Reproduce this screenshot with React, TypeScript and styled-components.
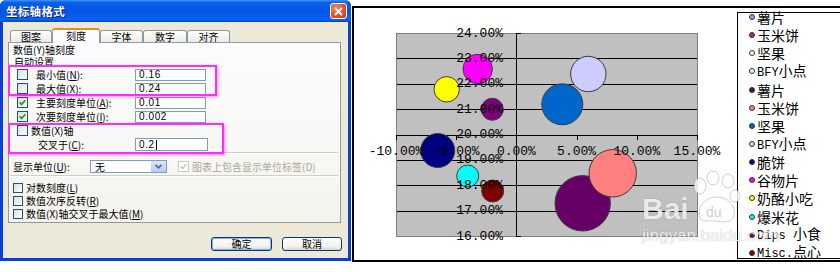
import React from "react";
import styled, { createGlobalStyle } from "styled-components";

const GlobalStyle = createGlobalStyle`
  html, body {
    margin: 0;
    padding: 0;
    background: #ffffff;
  }
  body {
    width: 840px;
    height: 272px;
    overflow: hidden;
    font-family: "Noto Sans CJK SC", sans-serif;
  }
`;

const Page = styled.div`
  display: flex;
  align-items: flex-start;
  width: 840px;
  height: 272px;
`;

/* ---------- dialog ---------- */

const Dialog = styled.div`
  width: 351px;
  height: 261px;
  flex: none;
  display: flex;
  flex-direction: column;
  background: #0b3ed6;
  border-radius: 6px 6px 0 0;
  overflow: hidden;
`;

const TitleBar = styled.div`
  height: 22px;
  flex: none;
  display: flex;
  align-items: center;
  justify-content: space-between;
  padding: 0 4px 0 6px;
  background: linear-gradient(
    to bottom,
    #3d95ff 0%,
    #0a5fe8 12%,
    #0055e5 50%,
    #0a62f0 88%,
    #0048d0 100%
  );
`;

const Title = styled.span`
  color: #ffffff;
  font-size: 11.5px;
  font-weight: 700;
  letter-spacing: 0.3px;
  text-shadow: 1px 1px 0 #0a1e6e;
`;

const CloseButton = styled.div`
  width: 17px;
  height: 16px;
  box-sizing: border-box;
  border: 1px solid #ffffff;
  border-radius: 3px;
  background: radial-gradient(circle at 35% 30%, #f08a6b 0%, #e0512f 55%, #c23b18 100%);
  display: flex;
  align-items: center;
  justify-content: center;
`;

const Body = styled.div`
  height: 236px;
  margin: 0 3px;
  background: #ece9d8;
  padding: 5px 6px 0 5px;
  box-sizing: border-box;
  display: flex;
  flex-direction: column;
`;

const TabRow = styled.div`
  height: 15px;
  display: flex;
  align-items: flex-end;
  padding-left: 2px;
`;

const Tab = styled.div<{ $active?: boolean; $w: number }>`
  width: ${(p) => p.$w}px;
  height: ${(p) => (p.$active ? 15 : 12)}px;
  box-sizing: border-box;
  border: 1px solid #919b9c;
  border-bottom: none;
  border-radius: 3px 3px 0 0;
  background: ${(p) =>
    p.$active ? "#fcfcfe" : "linear-gradient(to bottom, #ffffff, #ecebe6)"};
  border-top: ${(p) => (p.$active ? "2px solid #e68b2c" : "1px solid #919b9c")};
  font-size: 10px;
  line-height: ${(p) => (p.$active ? 12 : 11)}px;
  text-align: center;
  color: #000;
  position: relative;
  z-index: ${(p) => (p.$active ? 2 : 1)};
  margin-bottom: ${(p) => (p.$active ? -1 : 0)}px;
  padding-bottom: ${(p) => (p.$active ? 1 : 0)}px;
`;

const Panel = styled.div`
  width: 333px;
  height: 181px;
  box-sizing: border-box;
  border: 1px solid #919b9c;
  background: linear-gradient(to bottom, #fcfcfe 0%, #f7f7f4 60%, #f4f3ee 100%);
  position: relative;
  display: flex;
  flex-direction: column;
  font-size: 10px;
  color: #000;
`;

const Heading = styled.div<{ $h: number; $pad: number }>`
  height: ${(p) => p.$h}px;
  line-height: ${(p) => p.$h}px;
  padding-left: ${(p) => p.$pad}px;
  white-space: nowrap;
`;

const FieldRow = styled.div`
  display: grid;
  grid-template-columns: 19px 99px 71px;
  align-items: center;
  height: 14px;
  padding-left: 8px;
`;

const CheckLine = styled.div<{ $pad: number; $gap: number; $h: number; $top?: number }>`
  display: flex;
  align-items: center;
  gap: ${(p) => p.$gap}px;
  height: ${(p) => p.$h}px;
  padding-left: ${(p) => p.$pad}px;
  margin-top: ${(p) => p.$top ?? 0}px;
  white-space: nowrap;
`;

const CrossRow = styled.div`
  display: grid;
  grid-template-columns: 97px 73px;
  align-items: center;
  height: 13px;
  padding-left: 29px;
`;

const UnitRow = styled.div`
  display: flex;
  align-items: center;
  height: 15px;
  margin-top: 5px;
  padding-left: 4px;
  white-space: nowrap;
`;

const UnitLabel = styled.span`
  width: 77px;
  flex: none;
`;

const Label = styled.span<{ $muted?: boolean }>`
  color: ${(p) => (p.$muted ? "#aca899" : "#000")};
  white-space: nowrap;
`;

const TextBox = styled.div<{ $h: number }>`
  height: ${(p) => p.$h}px;
  box-sizing: border-box;
  border: 1px solid #7f9db9;
  background: #ffffff;
  padding-left: 3px;
  display: flex;
  align-items: center;
  font-family: "Liberation Sans", sans-serif;
  font-size: 10px;
  letter-spacing: 0.6px;
`;

const Caret = styled.span`
  display: inline-block;
  width: 1px;
  height: 10px;
  background: #000;
  margin-left: 1px;
`;

const Separator = styled.div<{ $top: number }>`
  height: 0;
  margin: ${(p) => p.$top}px 2px 0 1px;
  border-top: 1px solid #d0d0bf;
  border-bottom: 1px solid #ffffff;
`;

const Select = styled.div`
  width: 77px;
  height: 13px;
  box-sizing: border-box;
  border: 1px solid #7f9db9;
  background: #ffffff;
  display: flex;
  align-items: stretch;
  flex: none;
`;

const SelectValue = styled.span`
  flex: 1;
  padding-left: 4px;
  line-height: 11px;
`;

const SelectButton = styled.span`
  width: 15px;
  background: linear-gradient(to bottom, #dae6fd, #b6cbf6);
  border-left: 1px solid #ffffff;
  display: flex;
  align-items: center;
  justify-content: center;
`;

const Highlight = styled.div<{ $top: number; $w: number }>`
  position: absolute;
  left: -1px;
  top: ${(p) => p.$top}px;
  width: ${(p) => p.$w}px;
  height: 31px;
  box-sizing: border-box;
  border: 2px solid #ff2bff;
  box-shadow: 1px 1px 2px rgba(255, 0, 255, 0.45);
  pointer-events: none;
`;

const ButtonRow = styled.div`
  margin-top: 14px;
  display: flex;
  justify-content: flex-end;
  gap: 10px;
`;

const DialogButton = styled.div<{ $default?: boolean; $w: number }>`
  width: ${(p) => p.$w}px;
  height: 14px;
  box-sizing: border-box;
  border: 1px solid #003c74;
  border-radius: 3px;
  background: linear-gradient(to bottom, #ffffff 0%, #f3f2ee 70%, #d8d3c8 100%);
  box-shadow: ${(p) => (p.$default ? "inset 0 0 0 1px #8fb0f0" : "none")};
  font-size: 10px;
  line-height: 12px;
  text-align: center;
  color: #000;
`;

const BoxWrap = styled.span<{ $disabled?: boolean; $size: number }>`
  display: inline-flex;
  align-items: center;
  justify-content: center;
  width: ${(p) => p.$size}px;
  height: ${(p) => p.$size}px;
  box-sizing: border-box;
  flex: none;
  border: 1px solid ${(p) => (p.$disabled ? "#cac8bb" : "#1c5180")};
  background: ${(p) =>
    p.$disabled ? "#ffffff" : "linear-gradient(135deg, #dcdcd7 0%, #ffffff 100%)"};
`;

function CheckBox({
  checked,
  disabled,
  size = 11,
}: {
  checked?: boolean;
  disabled?: boolean;
  size?: number;
}) {
  return (
    <BoxWrap $disabled={disabled} $size={size}>
      {checked && (
        <svg width="7" height="7" viewBox="0 0 7 7">
          <path
            d="M0.6 3.4 L2.6 5.4 L6.4 1.2"
            fill="none"
            stroke={disabled ? "#cac8bb" : "#21a121"}
            strokeWidth="1.7"
          />
        </svg>
      )}
    </BoxWrap>
  );
}

/* ---------- chart ---------- */

const ChartFrame = styled.div`
  flex: 1;
  margin: 6px 0 0 1px;
  height: 256px;
  box-sizing: border-box;
  border: 2px solid #000;
  border-right: none;
  background: #ffffff;
  display: flex;
  align-items: flex-start;
  position: relative;
  overflow: hidden;
`;

const PlotSvg = styled.svg`
  width: 383px;
  height: 252px;
  flex: none;
  display: block;
`;

const Legend = styled.div`
  flex: 1;
  min-width: 0;
  margin-top: 4px;
  height: 247px;
  box-sizing: border-box;
  border: 1px solid #000;
  border-right: none;
  padding-left: 11px;
`;

const LegendList = styled.ul`
  list-style: none;
  margin: -5px 0 0;
  padding: 0;
`;

const LegendItem = styled.li`
  display: flex;
  align-items: center;
  height: 18.15px;
  white-space: nowrap;
`;

const LegendText = styled.span`
  font-family: "Noto Sans CJK SC", sans-serif;
  font-size: 14px;
  line-height: 18px;
  color: #000;
  white-space: nowrap;
`;

const Marker = styled.span<{ $color: string }>`
  width: 6px;
  height: 6px;
  box-sizing: border-box;
  border-radius: 50%;
  border: 1px solid #333333;
  background: ${(p) => p.$color};
  margin-right: 2px;
  flex: none;
`;

const Latin = styled.span`
  font-family: "Liberation Mono", monospace;
  font-size: 12px;
  white-space: pre;
`;

const Watermark = styled.div`
  position: absolute;
  left: 288px;
  top: 162px;
  pointer-events: none;
  color: rgba(255, 255, 255, 0.85);
  font-family: "Liberation Sans", sans-serif;
`;

const WatermarkTop = styled.div`
  display: flex;
  align-items: flex-end;
  gap: 2px;
`;

const WatermarkBai = styled.span`
  font-size: 30px;
  font-weight: 700;
  line-height: 30px;
  text-shadow: 0 0 1px rgba(0, 0, 0, 0.35);
  margin-bottom: 2px;
`;

const WatermarkUrl = styled.div`
  font-size: 17px;
  line-height: 18px;
  margin-top: 1px;
  text-shadow: 0 0 1px rgba(0, 0, 0, 0.3);
`;

const legendItems: { color: string; latin?: string; text: string }[] = [
  { color: "#9999ff", text: "薯片" },
  { color: "#993366", text: "玉米饼" },
  { color: "#ffffcc", text: "坚果" },
  { color: "#ccffff", latin: "BFY", text: "小点" },
  { color: "#660066", text: "薯片" },
  { color: "#ff8080", text: "玉米饼" },
  { color: "#0066cc", text: "坚果" },
  { color: "#ccccff", latin: "BFY", text: "小点" },
  { color: "#000080", text: "脆饼" },
  { color: "#ff00ff", text: "谷物片" },
  { color: "#ffff00", text: "奶酪小吃" },
  { color: "#00ffff", text: "爆米花" },
  { color: "#800080", latin: "Dips ", text: "小食" },
  { color: "#800000", latin: "Misc.", text: "点心" },
];

const bubbles = [
  { cx: 582.7, cy: 203.3, r: 27.7, fill: "#660066" },
  { cx: 612.7, cy: 173.3, r: 23.7, fill: "#ff8080" },
  { cx: 562.3, cy: 104.3, r: 20.5, fill: "#0066cc" },
  { cx: 588.3, cy: 74, r: 17.7, fill: "#ccccff" },
  { cx: 437.7, cy: 150.5, r: 17, fill: "#000080" },
  { cx: 477.7, cy: 69, r: 14.7, fill: "#ff00ff" },
  { cx: 446.7, cy: 89.3, r: 12.7, fill: "#ffff00" },
  { cx: 467.7, cy: 176, r: 11, fill: "#00ffff" },
  { cx: 492.3, cy: 109.3, r: 11, fill: "#800080" },
  { cx: 492.7, cy: 191, r: 11, fill: "#800000" },
];

// plot area in page coordinates
const PLOT = { left: 396, right: 697, top: 33, bottom: 236 };
const yOf = (v: number) => PLOT.top + ((24 - v) * (PLOT.bottom - PLOT.top)) / 8;
const xOf = (v: number) => PLOT.left + ((v + 10) * (PLOT.right - PLOT.left)) / 25;
const AXIS_X = xOf(0);
const AXIS_Y = yOf(20);

const yTicks = [24, 23, 22, 21, 20, 19, 18, 17, 16];
const xTicks = [-10, -5, 0, 5, 10, 15];

function BubbleChart() {
  const labelFont = { fontFamily: "'Liberation Mono', monospace", fontSize: 13 };
  return (
    <PlotSvg viewBox="354 8 383 252">
      <rect
        x={PLOT.left + 0.5}
        y={PLOT.top + 0.5}
        width={PLOT.right - PLOT.left}
        height={PLOT.bottom - PLOT.top}
        fill="#c0c0c0"
        stroke="#808080"
      />
      {yTicks.slice(1, -1).map((v) => (
        <line
          key={v}
          x1={PLOT.left + 1}
          x2={PLOT.right}
          y1={Math.round(yOf(v)) + 0.5}
          y2={Math.round(yOf(v)) + 0.5}
          stroke="#000"
        />
      ))}
      <line
        x1={Math.round(AXIS_X) + 0.5}
        x2={Math.round(AXIS_X) + 0.5}
        y1={PLOT.top}
        y2={PLOT.bottom + 1}
        stroke="#000"
      />
      {yTicks.map((v) => (
        <line
          key={"yt" + v}
          x1={Math.round(AXIS_X)}
          x2={Math.round(AXIS_X) + 5}
          y1={Math.round(yOf(v)) + 0.5}
          y2={Math.round(yOf(v)) + 0.5}
          stroke="#000"
        />
      ))}
      {xTicks.map((v) => (
        <line
          key={"xt" + v}
          x1={Math.round(xOf(v)) + 0.5}
          x2={Math.round(xOf(v)) + 0.5}
          y1={Math.round(AXIS_Y)}
          y2={Math.round(AXIS_Y) + 5}
          stroke="#000"
        />
      ))}
      {bubbles.map((b, i) => (
        <circle key={i} cx={b.cx} cy={b.cy} r={b.r} fill={b.fill} stroke="#3a3a3a" strokeWidth="1" />
      ))}
      {yTicks.map((v) => (
        <text
          key={"yl" + v}
          x={503}
          y={yOf(v)}
          textAnchor="end"
          dominantBaseline="central"
          style={labelFont}
        >
          {v.toFixed(2)}%
        </text>
      ))}
      {xTicks.map((v) => (
        <text
          key={"xl" + v}
          x={xOf(v)}
          y={151.5}
          textAnchor="middle"
          dominantBaseline="central"
          style={labelFont}
        >
          {v.toFixed(2)}%
        </text>
      ))}
    </PlotSvg>
  );
}

function Paw() {
  return (
    <svg width="50" height="56" viewBox="0 0 50 56">
      <g fill="rgba(255,255,255,0.8)" stroke="rgba(120,120,120,0.35)" strokeWidth="1">
        <ellipse cx="9" cy="16" rx="6" ry="8" />
        <ellipse cx="22" cy="8" rx="6" ry="7" />
        <ellipse cx="37" cy="11" rx="6" ry="7" />
        <ellipse cx="44" cy="26" rx="5" ry="6" />
        <path d="M8 44 C8 32 18 27 26 27 C36 27 45 35 43 45 C41 54 31 52 25 51 C18 50 8 54 8 44 Z" />
      </g>
      <text x="15" y="47" fontSize="14" fontFamily="Liberation Sans, sans-serif" fill="rgba(200,200,200,0.9)">
        du
      </text>
    </svg>
  );
}

export default function App() {
  return (
    <>
      <GlobalStyle />
      <Page>
        <Dialog>
          <TitleBar>
            <Title>坐标轴格式</Title>
            <CloseButton>
              <svg width="9" height="9" viewBox="0 0 9 9">
                <path d="M1 1 L8 8 M8 1 L1 8" stroke="#fff" strokeWidth="1.8" />
              </svg>
            </CloseButton>
          </TitleBar>
          <Body>
            <TabRow>
              <Tab $w={42}>图案</Tab>
              <Tab $w={48} $active>
                刻度
              </Tab>
              <Tab $w={43}>字体</Tab>
              <Tab $w={44}>数字</Tab>
              <Tab $w={43}>对齐</Tab>
            </TabRow>
            <Panel>
              <Heading $h={12} $pad={4} style={{ marginTop: 1 }}>
                数值(Y)轴刻度
              </Heading>
              <Heading $h={11} $pad={5}>
                自动设置
              </Heading>
              <FieldRow>
                <CheckBox />
                <Label>
                  最小值(<u>N</u>):
                </Label>
                <TextBox $h={12}>0.16</TextBox>
              </FieldRow>
              <FieldRow>
                <CheckBox />
                <Label>
                  最大值(<u>X</u>):
                </Label>
                <TextBox $h={12}>0.24</TextBox>
              </FieldRow>
              <FieldRow>
                <CheckBox checked />
                <Label>
                  主要刻度单位(<u>A</u>):
                </Label>
                <TextBox $h={12}>0.01</TextBox>
              </FieldRow>
              <FieldRow>
                <CheckBox checked />
                <Label>
                  次要刻度单位(<u>I</u>):
                </Label>
                <TextBox $h={12}>0.002</TextBox>
              </FieldRow>
              <CheckLine $pad={8} $gap={3} $h={13} $top={1}>
                <CheckBox />
                <Label>数值(X)轴</Label>
              </CheckLine>
              <CrossRow>
                <Label>
                  交叉于(<u>C</u>):
                </Label>
                <TextBox $h={13}>
                  0.2
                  <Caret />
                </TextBox>
              </CrossRow>
              <Separator $top={2} />
              <UnitRow>
                <UnitLabel>
                  显示单位(<u>U</u>):
                </UnitLabel>
                <Select>
                  <SelectValue>无</SelectValue>
                  <SelectButton>
                    <svg width="7" height="5" viewBox="0 0 7 5">
                      <path d="M0.5 0.8 L3.5 3.8 L6.5 0.8" fill="none" stroke="#4d6185" strokeWidth="1.6" />
                    </svg>
                  </SelectButton>
                </Select>
                <CheckLine $pad={11} $gap={3} $h={15}>
                  <CheckBox checked disabled />
                  <Label $muted>图表上包含显示单位标签(D)</Label>
                </CheckLine>
              </UnitRow>
              <Separator $top={1} />
              <CheckLine $pad={4} $gap={3} $h={13} $top={4}>
                <CheckBox size={10} />
                <Label>
                  对数刻度(<u>L</u>)
                </Label>
              </CheckLine>
              <CheckLine $pad={4} $gap={3} $h={13}>
                <CheckBox size={10} />
                <Label>
                  数值次序反转(<u>R</u>)
                </Label>
              </CheckLine>
              <CheckLine $pad={4} $gap={3} $h={13}>
                <CheckBox size={10} />
                <Label>
                  数值(X)轴交叉于最大值(<u>M</u>)
                </Label>
              </CheckLine>
              <Highlight $top={22} $w={209} />
              <Highlight $top={80} $w={216} />
            </Panel>
            <ButtonRow>
              <DialogButton $w={61} $default>
                确定
              </DialogButton>
              <DialogButton $w={60}>取消</DialogButton>
            </ButtonRow>
          </Body>
        </Dialog>
        <ChartFrame>
          <BubbleChart />
          <Legend>
            <LegendList>
              {legendItems.map((item, i) => (
                <LegendItem key={i}>
                  <Marker $color={item.color} />
                  <LegendText>
                    {item.latin && <Latin>{item.latin}</Latin>}
                    {item.text}
                  </LegendText>
                </LegendItem>
              ))}
            </LegendList>
          </Legend>
          <Watermark>
            <WatermarkTop>
              <WatermarkBai>Bai</WatermarkBai>
              <Paw />
            </WatermarkTop>
            <WatermarkUrl>jingyan.baidu.com</WatermarkUrl>
          </Watermark>
        </ChartFrame>
      </Page>
    </>
  );
}
